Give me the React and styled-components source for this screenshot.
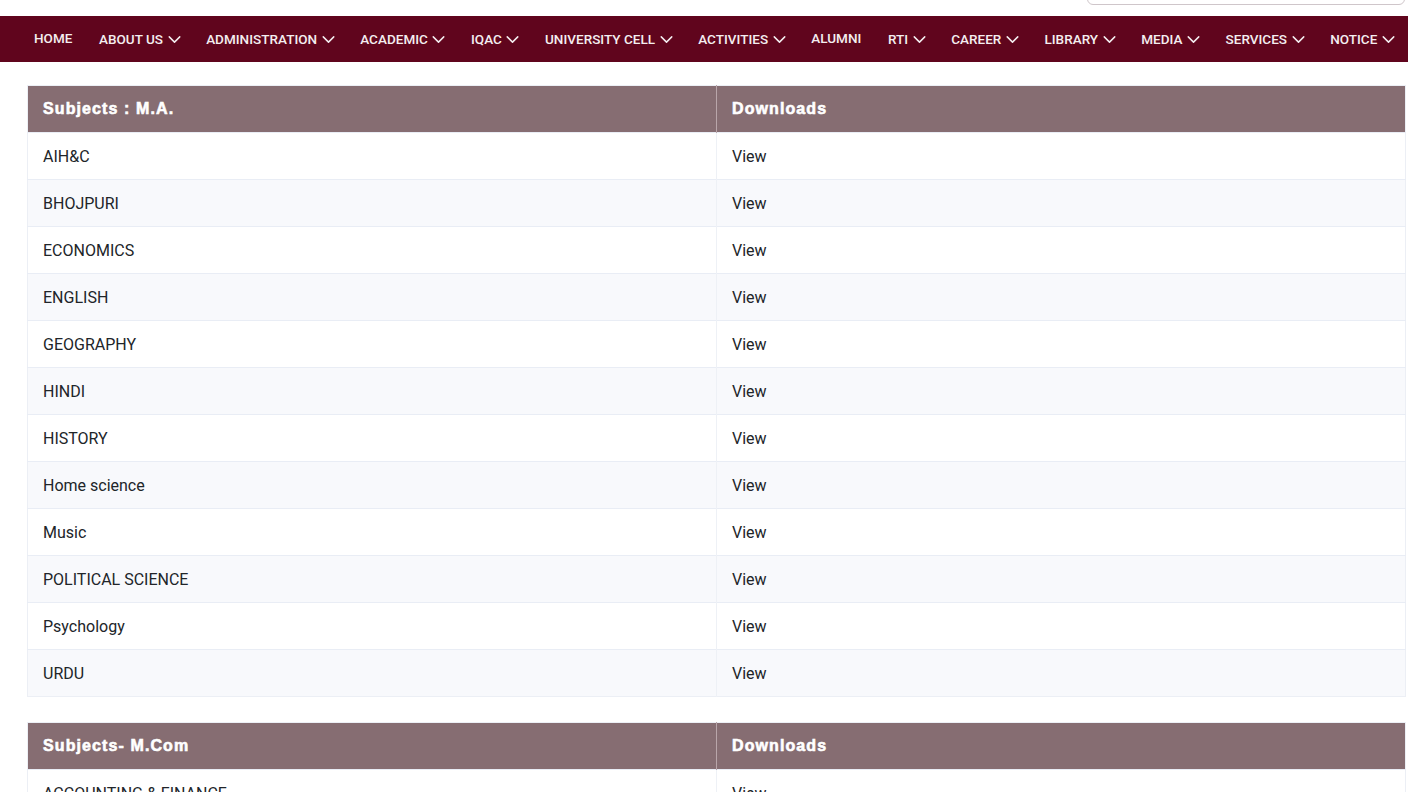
import React from "react";
import styled, { createGlobalStyle } from "styled-components";
import { ChevronDown } from "lucide-react";

const GlobalStyle = createGlobalStyle`
  * { box-sizing: border-box; }
  body {
    margin: 0;
    background: #ffffff;
    font-family: Roboto, "Liberation Sans", Arial, sans-serif;
    overflow: hidden;
  }
`;

const TopBar = styled.div`
  height: 16px;
  overflow: hidden;
  display: flex;
  justify-content: flex-end;
  align-items: flex-end;
  padding: 0 3px 11px 0;
`;

const SearchBox = styled.div`
  width: 318px;
  height: 40px;
  flex-shrink: 0;
  border: 1px solid #cfc6ca;
  border-radius: 6px;
  background: #fff;
`;

const NavBar = styled.nav`
  height: 46px;
  background: #60051d;
  display: flex;
  align-items: center;
  padding-left: 20.7px;
`;

const NavItem = styled.a`
  display: flex;
  align-items: center;
  padding: 0 13.3px;
  color: #f4eef0;
  font-family: Roboto, "Liberation Sans", sans-serif;
  font-size: 13.5px;
  font-weight: 500;
  letter-spacing: 0.02px;
  white-space: nowrap;
  cursor: pointer;
  margin-top: ${(p) => (p.$plain ? "-3px" : "0")};

  svg {
    margin-left: 0.5px;
    margin-right: -5px;
    flex-shrink: 0;
  }
`;

const Content = styled.main`
  padding: 23px 2px 0 27px;
`;

const Table = styled.table`
  width: 100%;
  border-collapse: collapse;
  table-layout: fixed;
  margin-bottom: 25px;
  border: 1px solid #eceff5;
`;

const HeadCell = styled.th`
  background: #866d72;
  height: 47px;
  padding: 0 15px;
  text-align: left;
  color: #ffffff;
  font-family: "Liberation Sans", Arial, sans-serif;
  font-size: 16px;
  font-weight: 700;
  letter-spacing: 1.1px;
  -webkit-text-stroke: 0.6px #ffffff;
  border-left: 1px solid #b9a6aa;

  &:first-child {
    border-left: none;
  }
`;

const Row = styled.tr`
  background: ${(p) => (p.$alt ? "#f8f9fc" : "#ffffff")};
  border-top: 1px solid #e9edf5;
`;

const Cell = styled.td`
  height: 47px;
  padding: 0 15px;
  color: #212529;
  font-size: 16px;
  border-left: 1px solid #eef1f6;

  &:first-child {
    border-left: none;
  }
`;

const ViewLink = styled.a`
  color: #212529;
  text-decoration: none;
  cursor: pointer;
`;

const navItems = [
  ["HOME", false],
  ["ABOUT US", true],
  ["ADMINISTRATION", true],
  ["ACADEMIC", true],
  ["IQAC", true],
  ["UNIVERSITY CELL", true],
  ["ACTIVITIES", true],
  ["ALUMNI", false],
  ["RTI", true],
  ["CAREER", true],
  ["LIBRARY", true],
  ["MEDIA", true],
  ["SERVICES", true],
  ["NOTICE", true],
];

const tables = [
  {
    title: "Subjects : M.A.",
    subjects: [
      "AIH&C",
      "BHOJPURI",
      "ECONOMICS",
      "ENGLISH",
      "GEOGRAPHY",
      "HINDI",
      "HISTORY",
      "Home science",
      "Music",
      "POLITICAL SCIENCE",
      "Psychology",
      "URDU",
    ],
  },
  {
    title: "Subjects- M.Com",
    subjects: ["ACCOUNTING & FINANCE", "MARKETING"],
  },
];

const SubjectTable = ({ title, subjects }) => (
  <Table>
    <thead>
      <tr>
        <HeadCell>{title}</HeadCell>
        <HeadCell>Downloads</HeadCell>
      </tr>
    </thead>
    <tbody>
      {subjects.map((s, i) => (
        <Row key={s} $alt={i % 2 === 1}>
          <Cell>{s}</Cell>
          <Cell>
            <ViewLink>View</ViewLink>
          </Cell>
        </Row>
      ))}
    </tbody>
  </Table>
);

export default function App() {
  return (
    <>
      <GlobalStyle />
      <TopBar>
        <SearchBox />
      </TopBar>
      <NavBar>
        {navItems.map(([label, drop]) => (
          <NavItem key={label} $plain={!drop}>
            {label}
            {drop && <ChevronDown size={21} strokeWidth={1.7} />}
          </NavItem>
        ))}
      </NavBar>
      <Content>
        {tables.map((t) => (
          <SubjectTable key={t.title} {...t} />
        ))}
      </Content>
    </>
  );
}
